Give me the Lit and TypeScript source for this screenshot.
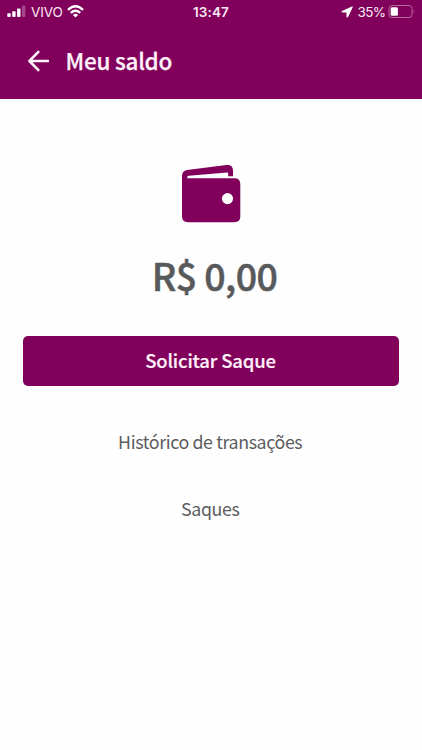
import { LitElement, html, css } from "lit";
import { customElement } from "lit/decorators.js";

@customElement("status-bar")
class StatusBar extends LitElement {
  static styles = css`
    :host { display: grid; grid-template-columns: 1fr auto 1fr; align-items: center; height: 24px; color: #fbeaf5; font: 14px/24px Inter, "Liberation Sans", sans-serif; }
    .side { display: flex; align-items: center; height: 24px; }
    .left { padding-left: 7px; }
    .right { justify-content: flex-end; padding-right: 6px; }
    .carrier { margin: 0 4px 0 5px; font-size: 13.5px; width: 32px; white-space: nowrap; letter-spacing: -0.1px; }
    .time { font-weight: 600; font-size: 13.5px; letter-spacing: 0.1px; }
    .percent { margin: 0 2.5px 0 4px; font-size: 13.5px; letter-spacing: -0.6px; white-space: nowrap; }
    svg { display: block; flex: none; }
  `;
  render() {
    return html`
      <div class="side left">
        <svg width="19" height="24" viewBox="0 0 19 24" fill="#fff">
          <rect x="0.3" y="13.2" width="3.4" height="3.8" rx="0.8" />
          <rect x="5.2" y="11.3" width="3.4" height="5.7" rx="0.8" />
          <rect x="10.1" y="8.6" width="3.4" height="8.4" rx="0.8" />
          <rect x="15" y="5.6" width="3.4" height="11.4" rx="0.8" opacity="0.28" />
        </svg>
        <span class="carrier">VIVO</span>
        <svg width="18" height="24" viewBox="0 0 18 24" fill="none" stroke="#fff" stroke-width="2.4">
          <path d="M1 9.8Q8.5 2.9 16 9.8" />
          <path d="M3.8 12.8Q8.5 8.6 13.2 12.8" />
          <path d="M8.5 17.6L5.9 15Q8.5 12.7 11.1 15Z" fill="#fff" stroke="none" />
        </svg>
      </div>
      <span class="time">13:47</span>
      <div class="side right">
        <svg width="12" height="24" viewBox="0 0 12 24" fill="#fff" stroke="#fff" stroke-width="1.1" stroke-linejoin="round">
          <path d="M11.2 6.9L1.2 11.5Q1 12 1.4 12H6V16.7Q6.2 17.2 6.6 16.7Z" />
        </svg>
        <span class="percent">35%</span>
        <svg width="28" height="24" viewBox="0 0 28 24">
          <rect x="1" y="5.5" width="23" height="12" rx="3" fill="none" stroke="#b8699c" />
          <rect x="2.7" y="7.3" width="7.2" height="8.5" rx="1.4" fill="#fff" />
          <path d="M25.5 9.6Q27.3 11.5 25.5 13.5Z" fill="#b55c99" />
        </svg>
      </div>`;
  }
}

@customElement("app-root")
class AppRoot extends LitElement {
  static styles = css`
    :host { display: flex; flex-direction: column; height: 750px; background: #fefefe; color: #58595b; font-family: "Noto Sans CJK SC", "Noto Sans", sans-serif; overflow: hidden; }
    header { height: 98.5px; background: #80005b; flex: none; }
    .bar { display: flex; align-items: center; height: 73px; box-sizing: border-box; padding-left: 27px; }
    .title { margin: 0 0 2px 15.5px; color: #fff0fa; font-size: 22.5px; line-height: 32px; font-weight: 500; letter-spacing: -0.25px; -webkit-text-stroke: 0.25px; white-space: nowrap; }
    main { display: flex; flex-direction: column; align-items: center; padding: 65.5px 23px 0; }
    .wallet { display: block; }
    .amount { margin-top: 21px; padding-left: 7px; font-size: 37.5px; line-height: 60px; font-weight: 500; letter-spacing: -0.6px; -webkit-text-stroke: 0.5px; white-space: nowrap; }
    button { width: 100%; height: 49.5px; margin: 31px 0 0; padding: 0 1px 2px 0; border: 0; border-radius: 5px; background: #80005b; color: #fff0fa; font: inherit; font-size: 18.5px; line-height: 48px; font-weight: 500; letter-spacing: -0.17px; -webkit-text-stroke: 0.2px; }
    .link { padding-right: 1.6px; font-size: 17.8px; line-height: 30px; color: #5c5d5f; letter-spacing: -0.38px; white-space: nowrap; }
    .history { margin-top: 40.5px; }
    .withdrawals { margin-top: 37px; }
    svg { display: block; flex: none; }
  `;
  render() {
    return html`
      <header>
        <status-bar></status-bar>
        <div class="bar">
          <svg width="23" height="22" viewBox="0 0 23 22" fill="none" stroke="#fff4fb" stroke-width="2.5" stroke-linejoin="round">
            <path d="M22 11H2.6M12.1 1.2L2.4 11L12.1 20.8" />
          </svg>
          <h1 class="title">Meu saldo</h1>
        </div>
      </header>
      <main>
        <svg class="wallet" width="60" height="60" viewBox="0 0 60 60">
          <path fill="#80005b" fill-rule="evenodd" d="M1 12Q1 6.8 6 6L45.5 1Q52 .4 52 6.8V12.2H47.2V9.6Q47.2 8.4 46 8.5L7.8 11.7Q6.3 12 6.3 13V14.2H53.5Q59.3 14.2 59.3 20V52.5Q59.3 58.2 53.5 58.2H7Q1 58.2 1 52ZM46.5 29a5.6 5.6 0 1 0 0 11.2a5.6 5.6 0 1 0 0-11.2Z" />
        </svg>
        <div class="amount">R$ 0,00</div>
        <button>Solicitar Saque</button>
        <div class="link history">Histórico de transações</div>
        <div class="link withdrawals">Saques</div>
      </main>`;
  }
}
